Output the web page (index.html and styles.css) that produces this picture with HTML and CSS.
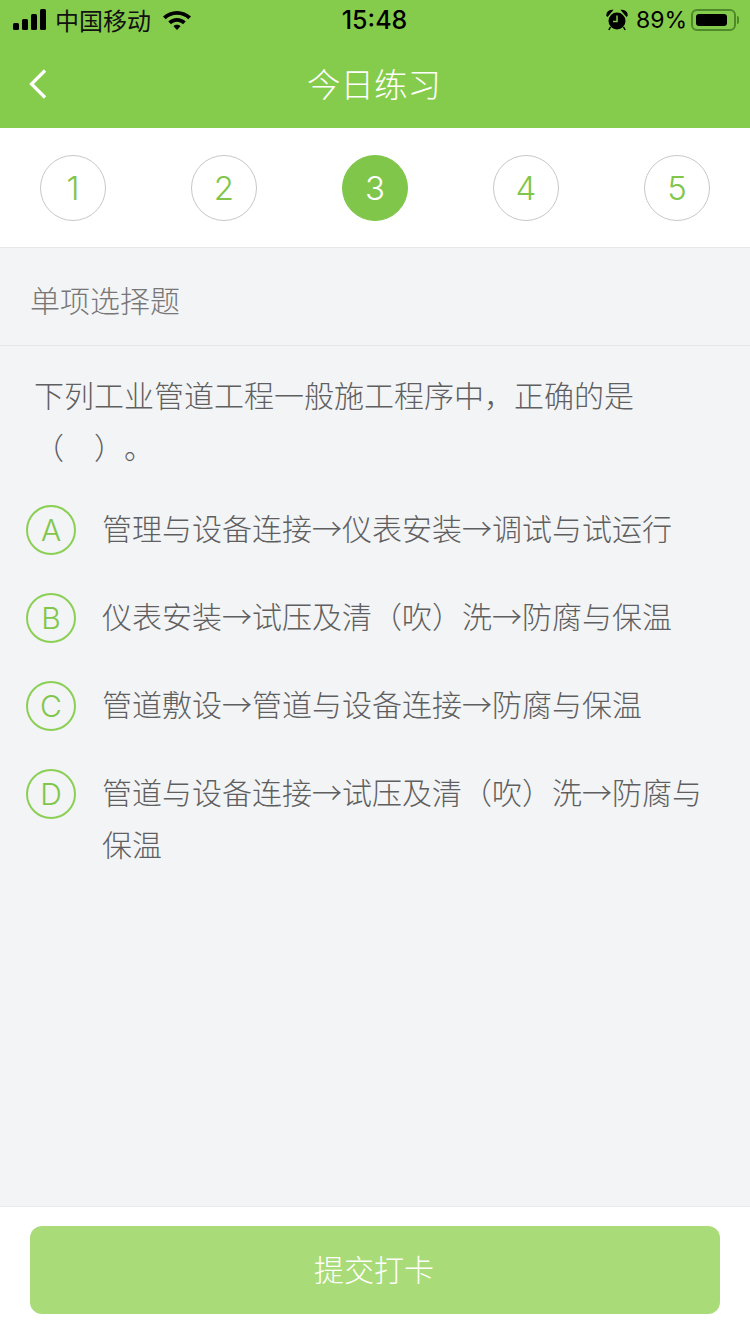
FILE: index.html
```html
<!DOCTYPE html>
<html lang="zh-CN">
<head>
<meta charset="utf-8">
<title>今日练习</title>
<link rel="stylesheet" href="styles.css">
</head>
<body>
<div class="page">
  <header class="header">
    <div class="status">
      <div class="status-left">
        <svg class="signal" width="34" height="22" viewBox="0 0 34 22"><rect x="0" y="14" width="6" height="7" rx="1.5"/><rect x="9" y="10" width="6" height="11" rx="1.5"/><rect x="18" y="5" width="6" height="16" rx="1.5"/><rect x="27" y="0" width="6" height="21" rx="1.5"/></svg>
        <span class="carrier">中国移动</span>
        <svg class="wifi" width="30" height="22" viewBox="0 0 30 22"><path d="M15 2C9.600 2 4.700 4.100 1 7.500L3.700 10.300C6.700 7.500 10.600 5.800 15 5.800S23.300 7.500 26.300 10.300L29 7.500C25.300 4.100 20.400 2 15 2Z"/><path d="M15 9C11.600 9 8.600 10.300 6.300 12.400L9 15.200C10.600 13.700 12.700 12.800 15 12.800S19.400 13.700 21 15.200L23.700 12.400C21.400 10.300 18.400 9 15 9Z"/><path d="M15 15.800C13.600 15.800 12.400 16.300 11.500 17.200L15 21L18.500 17.200C17.600 16.300 16.400 15.800 15 15.800Z"/></svg>
      </div>
      <div class="time">15:48</div>
      <div class="status-right">
        <svg class="alarm" width="22" height="22" viewBox="0 0 22 22"><circle cx="11" cy="12" r="8.500"/><path d="M1 6.500C1 3.500 3.200 1.500 6 1.500L1.500 7Z M21 6.500C21 3.500 18.800 1.500 16 1.500L20.500 7Z M4.500 18L2.800 21 M17.500 18L19.200 21" stroke="#000" stroke-width="1.500"/><path d="M11 6.500V12.500H7" fill="none" stroke="#86cc4c" stroke-width="1.500"/></svg>
        <span class="battery-text">89%</span>
        <div class="battery"><div class="battery-fill"></div></div>
        <div class="battery-tip"></div>
      </div>
    </div>
    <div class="nav">
      <svg class="back" width="20" height="32" viewBox="0 0 20 32"><path d="M17 2.500L3.500 16L17 29.500" fill="none" stroke="#fff" stroke-width="3.200"/></svg>
      <h1 class="nav-title">今日练习</h1>
    </div>
  </header>
  <nav class="steps">
    <div class="step">1</div>
    <div class="step">2</div>
    <div class="step step-on">3</div>
    <div class="step">4</div>
    <div class="step">5</div>
  </nav>
  <main class="content">
    <div class="kind">单项选择题</div>
    <p class="question">下列工业管道工程一般施工程序中，正确的是<span class="blank">（&emsp;）。</span></p>
    <ul class="options">
      <li class="option"><span class="letter">A</span><span class="option-text">管理与设备连接→仪表安装→调试与试运行</span></li>
      <li class="option"><span class="letter">B</span><span class="option-text">仪表安装→试压及清（吹）洗→防腐与保温</span></li>
      <li class="option"><span class="letter">C</span><span class="option-text">管道敷设→管道与设备连接→防腐与保温</span></li>
      <li class="option"><span class="letter">D</span><span class="option-text">管道与设备连接→试压及清（吹）洗→防腐与保温</span></li>
    </ul>
  </main>
  <footer class="footer">
    <button class="submit" type="button">提交打卡</button>
  </footer>
</div>
</body>
</html>
```
FILE: styles.css
```css
* { box-sizing: border-box; }
html, body { margin: 0; padding: 0; }
body {
  width: 750px;
  height: 1334px;
  overflow: hidden;
  font-family: "Noto Sans CJK SC", "Noto Sans", sans-serif;
  font-weight: 300;
  text-spacing-trim: space-all;
}
.page {
  display: flex;
  flex-direction: column;
  height: 1334px;
  background: #f3f4f6;
}
.header { background: #86cc4c; height: 128px; flex: none; }
.status {
  height: 40px;
  display: grid;
  grid-template-columns: 1fr auto 1fr;
  align-items: center;
  color: #000;
}
.status-left { display: flex; align-items: center; padding-left: 13px; }
.signal { margin-top: -1px; }
.carrier { font-size: 24px; line-height: 40px; margin-left: 8px; color: #111; font-weight: 400; }
.wifi { margin-left: 11px; margin-top: -1px; }
.time { font: 500 25px/40px Inter, sans-serif; margin-right: 1px; }
.status-right { display: flex; align-items: center; justify-content: flex-end; padding-right: 11px; }
.alarm { margin-right: 8px; }
.battery-text { font: 400 23px/40px Inter, sans-serif; }
.battery {
  width: 45px;
  height: 22px;
  margin-left: 4px;
  padding: 3px;
  border: 2px solid #4e8a29;
  border-radius: 6px;
}
.battery-fill { width: 88%; height: 100%; background: #000; border-radius: 3px; }
.battery-tip { width: 2px; height: 8px; margin-left: 1px; background: #4e8a29; border-radius: 0 2px 2px 0; }
.nav {
  height: 88px;
  position: relative;
  display: flex;
  align-items: center;
  justify-content: center;
}
.back { position: absolute; left: 28px; top: 28px; }
.nav-title { margin: -3px 0 0 -2px; font-size: 33.500px; font-weight: 300; color: #fff; line-height: 88px; }
.steps {
  flex: none;
  height: 120px;
  padding: 27px 40px 0;
  display: flex;
  justify-content: space-between;
  background: #fff;
  border-bottom: 1px solid #e6e7e9;
}
.step {
  width: 66px;
  height: 66px;
  border: 1px solid #c8c8c8;
  border-radius: 50%;
  display: flex;
  align-items: center;
  justify-content: center;
  font: 300 33px/1 Inter, sans-serif;
  color: #7fc64a;
}
.step-on { background: #7fc64a; border-color: #7fc64a; color: #fff; }
.content { flex: 1; min-height: 0; }
.kind {
  height: 98px;
  padding-left: 30px;
  font-size: 30px;
  line-height: 103px;
  color: #777;
  border-bottom: 1px solid #e6e7e9;
}
.question {
  margin: 0;
  padding: 22px 34px 0;
  font-size: 30px;
  line-height: 52px;
  color: #5f5f5f;
}
.blank { white-space: nowrap; }
.options { list-style: none; margin: 0; padding: 29px 30px 0 26px; }
.option { display: flex; align-items: flex-start; margin-bottom: 34px; }
.letter {
  flex: none;
  width: 50px;
  height: 50px;
  margin-top: 4px;
  border: 2px solid #8ccf55;
  border-radius: 50%;
  display: flex;
  align-items: center;
  justify-content: center;
  font: 300 30px/1 Inter, sans-serif;
  color: #7fc64a;
}
.option-text { margin-left: 26px; font-size: 30px; line-height: 52px; color: #5f5f5f; }
.footer {
  flex: none;
  height: 128px;
  padding: 19px 30px 0;
  background: #fff;
  border-top: 1px solid #e8e9eb;
}
.submit {
  display: block;
  width: 690px;
  height: 88px;
  padding: 0 2px 4px 0;
  border: 0;
  border-radius: 12px;
  background: #a9dc78;
  color: #fff;
  font-family: "Noto Sans CJK SC", sans-serif;
  font-weight: 300;
  font-size: 30px;
}
```
